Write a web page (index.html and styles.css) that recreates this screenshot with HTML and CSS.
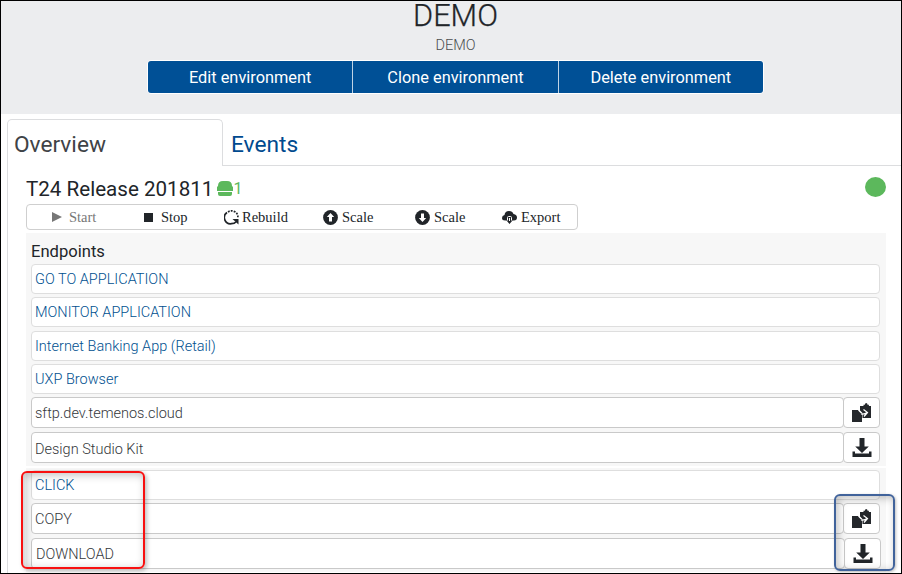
FILE: index.html
```html
<!DOCTYPE html>
<html lang="en">
<head>
<meta charset="utf-8">
<title>DEMO environment</title>
<link rel="stylesheet" href="styles.css">
</head>
<body>
<svg class="defs" aria-hidden="true">
  <symbol id="copy" viewBox="0 0 20 20">
    <path fill="#24272b" d="M0 7h6.500L10 10.500V19H0zM8 3h3.500V1.800h1.300Q13 0 14.200 0t1.400 1.800h1.300V3H19v12h-8.500V10L8 7.500z"/>
    <path fill="none" stroke="#fff" stroke-width="1.200" d="M6.500 7l3 3.200M9 11q4 .500 6-1.500M11.500 6.500l4 3-3.500 4"/>
  </symbol>
  <symbol id="download" viewBox="0 0 20 20">
    <path fill="#212529" d="M7.500 0h5v8.500h4.300L10 15 3.200 8.500h4.300zM.5 13.500H3V15.500h14v-2h2.500V19H.5z"/>
  </symbol>
</svg>
<div class="page">
  <header class="header">
    <h1>DEMO</h1>
    <p class="sub">DEMO</p>
    <div class="actions">
      <button>Edit environment</button><button>Clone environment</button><button>Delete environment</button>
    </div>
  </header>
  <nav class="tabs">
    <a class="tab active">Overview</a><a class="tab">Events</a>
  </nav>
  <main class="content">
    <div class="title">
      <h2>T24 Release 201811</h2>
      <svg class="stack" viewBox="0 0 16 15"><path fill="#5cb85c" d="M1 5q0-5 5-5h4q5 0 5 5l1 1v4H0V6zM1 11h14v2q0 2-2 2H3q-2 0-2-2z"/></svg>
      <span class="count">1</span>
      <span class="status"></span>
    </div>
    <div class="toolbar">
      <span class="tool start"><svg width="10" height="10" viewBox="0 0 10 10"><path fill="#777" d="M0 0l10 5-10 5z"/></svg>Start</span>
      <span class="tool stop"><svg width="9" height="9" viewBox="0 0 9 9"><path fill="#212529" d="M0 0h9v9H0z"/></svg>Stop</span>
      <span class="tool rebuild"><svg width="15" height="15" viewBox="0 0 15 15"><g fill="none" stroke="#212529" stroke-width="1.700"><path d="M3 2.500A6.200 6.200 0 0 0 7.500 13.700q3 0 4.600-2"/><path stroke-dasharray="1.800 1.200" d="M4 2q3-2 6-.6 4 1.600 3.900 6"/></g><path fill="#212529" d="M8.500 9h6v5.500z"/></svg>Rebuild</span>
      <span class="tool up"><svg width="15" height="15" viewBox="0 0 15 15"><circle cx="7.500" cy="7.500" r="7.400" fill="#212529"/><path fill="#fff" d="M7.500 3l3.700 4H9v4.500H6V7H3.800z"/></svg>Scale</span>
      <span class="tool down"><svg width="15" height="15" viewBox="0 0 15 15"><circle cx="7.500" cy="7.500" r="7.400" fill="#212529"/><path fill="#fff" d="M7.500 12l3.700-4H9V3.500H6V8H3.800z"/></svg>Scale</span>
      <span class="tool export"><svg width="15" height="13" viewBox="0 0 15 13"><path fill="#212529" d="M3 9.500Q0 9.500 0 7t2.500-3Q3 0 7 0q3.500 0 4.500 3Q15 3.500 15 6.500q0 3-3 3h-1.500L7.500 13l-3-3.500z"/><path fill="none" stroke="#fff" stroke-width="1" d="M5.500 9.500V6.500q0-1 1-1h2q1 0 1 1v3M7.500 7v3"/></svg>Export</span>
    </div>
    <section class="panel first">
      <h3>Endpoints</h3>
      <div class="row link"><a class="cell">GO TO APPLICATION</a></div>
      <div class="row link"><a class="cell">MONITOR APPLICATION</a></div>
      <div class="row link"><a class="cell">Internet Banking App (Retail)</a></div>
      <div class="row link"><a class="cell">UXP Browser</a></div>
      <div class="row"><div class="cell">sftp.dev.temenos.cloud</div><button class="icon"><svg width="20" height="20"><use href="#copy"/></svg></button></div>
      <div class="row"><div class="cell kit">Design Studio Kit</div><button class="icon"><svg width="20" height="20"><use href="#download"/></svg></button></div>
    </section>
    <section class="panel second">
      <div class="row link"><a class="cell">CLICK</a></div>
      <div class="row"><div class="cell">COPY</div><button class="icon"><svg width="20" height="20"><use href="#copy"/></svg></button></div>
      <div class="row last"><div class="cell">DOWNLOAD</div><button class="icon"><svg width="20" height="20"><use href="#download"/></svg></button></div>
    </section>
  </main>
  <div class="mark red"></div>
  <div class="mark blue"></div>
</div>
</body>
</html>
```

FILE: styles.css
```css
* { box-sizing: border-box; }
body { margin: 0; font-family: Roboto, sans-serif; color: #212529; overflow: hidden; }
h1, h2, h3, p { margin: 0; font-weight: 400; }
button { font: inherit; margin: 0; padding: 0; }
svg { display: block; flex: none; }
.defs { position: absolute; width: 0; height: 0; }
.page { position: relative; width: 902px; height: 574px; border: 1px solid #000; background: #fff; }
.header { height: 113px; background: #ecedef; display: flex; flex-direction: column; align-items: center; padding-left: 9px; }
h1 { font-size: 30.700px; line-height: 30px; height: 35px; font-weight: 300; -webkit-text-stroke: .25px #212529; }
.sub { font-size: 14.500px; line-height: 20px; height: 24px; font-weight: 300; color: #4a4d50; }
.actions { display: flex; width: 617px; height: 34px; border: 1px solid #fff; border-radius: 4px; overflow: hidden; }
.actions button { flex: 1; border: 0; background: #005096; color: #fff; font-size: 16.350px; font-weight: 400; line-height: 33px; }
.actions button + button { border-left: 1px solid #bfd3e5; }
.tabs { display: flex; height: 52px; padding: 5px 0 0 6px; background: linear-gradient(#dcdddf, #dcdddf) 222px 51px / 100% 1px no-repeat; }
.tab { font-size: 22.700px; line-height: 51px; color: #004a8f; padding-left: 8px; height: 47px; }
.tab.active { width: 216px; color: #3f4347; border: 1px solid #dcdddf; border-bottom: 0; border-radius: 5px 5px 0 0; padding-left: 6px; background: #fff; line-height: 49px; }
.content { margin-left: 6px; border-left: 1px solid #dcdddf; padding: 0 15px 0 18px; height: 407px; }
.title { display: flex; height: 38px; align-items: center; padding-top: 7px; }
h2 { font-size: 20.600px; line-height: 30px; }
.stack { width: 16px; height: 15px; margin-left: 4px; }
.count { font-size: 16px; font-weight: 400; color: #5cb85c; }
.status { width: 21px; height: 20px; border-radius: 50%; background: #5cb85c; margin: -4px 0 0 auto; }
.toolbar { display: flex; width: 552px; height: 26px; border: 1px solid #cfcfcf; border-radius: 4px; font: 14.500px/24px "Liberation Serif", serif; }
.tool { display: flex; align-items: center; gap: 5px; flex: none; }
.start { width: 92px; padding-left: 25px; color: #777; gap: 7px; }
.stop { width: 105px; padding-left: 25px; gap: 8px; }
.rebuild { width: 99px; gap: 3px; }
.up { width: 92px; gap: 4px; }
.down { width: 87px; gap: 4px; }
.export { gap: 4px; }
.panel { width: 860px; background: #f7f7f7; padding-left: 5px; }
.first { margin-top: 3px; height: 233px; padding-top: 7px; }
.second { margin-top: 2px; height: 104px; padding-top: 2px; }
h3 { font-size: 16.600px; line-height: 24px; height: 24px; }
.row { display: flex; width: 849px; height: 31px; margin-bottom: 4px; }
.row.link { height: 30px; margin-bottom: 3.300px; }
.row.last { width: 850px; }
.cell { flex: 1; min-width: 0; border: 1px solid #c9c9c9; border-radius: 4px; background: #fff; padding-left: 3px; font-size: 14.500px; font-weight: 300; line-height: 31px; color: #34373b; }
.last .cell { padding-left: 4px; }
.cell.kit { line-height: 33px; }
.link .cell { border-color: #dedede; color: #00508f; line-height: 29px; }
.icon { width: 37px; margin-left: -1px; border: 1px solid #c9c9c9; border-radius: 4px; background: #fff; display: flex; align-items: center; justify-content: center; }
.mark { position: absolute; border-radius: 6px; }
.red { left: 20px; top: 470px; width: 124px; height: 98px; border: 2px solid #f81010; box-shadow: 2px 2px 4px rgba(0,0,0,.25), inset 2px 2px 8px rgba(0,0,0,.25); }
.blue { left: 833px; top: 493px; width: 61px; height: 77px; border: 2px solid #41639b; box-shadow: 1px 1px 3px rgba(0,0,0,.25), inset 2px 2px 8px rgba(0,0,0,.25); }
```
